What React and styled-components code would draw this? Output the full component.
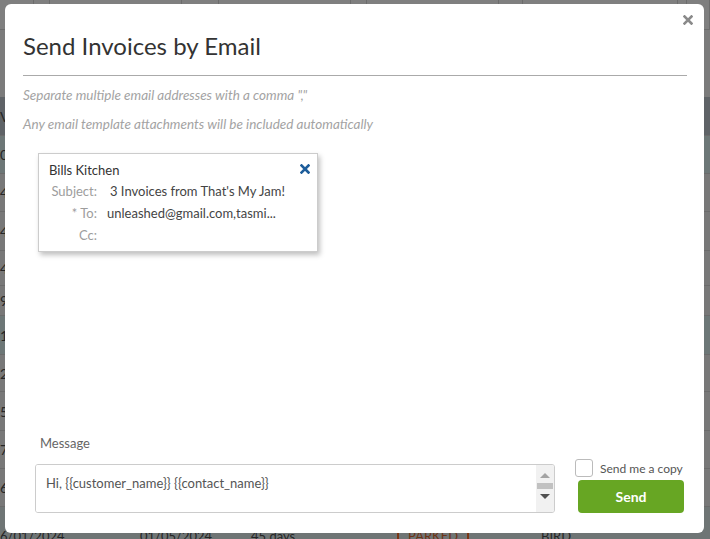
import React from 'react';
import styled, { createGlobalStyle } from 'styled-components';

const GlobalStyle = createGlobalStyle`
  html, body {
    margin: 0;
    padding: 0;
    background: #7b7b7b;
  }
  * {
    box-sizing: border-box;
  }
`;

const topCols = [34, 16, 132, 37, 132, 16, 132, 24, 155, 9, 23];

// only the first letter of each row peeks out left of the dialog
const rows = [
  { first: 'V', tone: 'head', h: 39 },
  { first: '0', tone: 'teal', h: 38 },
  { first: '4', tone: 'grey', h: 38 },
  { first: '4', tone: 'grey', h: 39 },
  { first: '4', tone: 'grey', h: 35 },
  { first: '9', tone: 'grey', h: 30 },
  { first: '1', tone: 'teal', h: 39 },
  { first: '2', tone: 'grey', h: 37 },
  { first: '5', tone: 'grey', h: 39 },
  { first: '7', tone: 'grey', h: 38 },
  { first: '6', tone: 'grey', h: 38 },
];

const tones = {
  head: '#5f6367',
  teal: '#6d7777',
  grey: '#787878',
};

const App = () => {
  return (
    <>
      <GlobalStyle />
      <Page>
        <Backdrop>
          <TopBar>
            {topCols.map((w, i) => (
              <TopCell key={i} style={{ width: w }} />
            ))}
          </TopBar>
          <Filler />
          {rows.map((r, i) => (
            <Row key={i} $tone={r.tone} style={{ height: r.h }}>
              {r.first}
            </Row>
          ))}
          <LastRow>
            <LastCell $w={140}>6/01/2024</LastCell>
            <LastCell $w={111}>01/05/2024</LastCell>
            <LastCell $w={146}>45 days</LastCell>
            <LastCell $w={144}>
              <Parked>PARKED</Parked>
            </LastCell>
            <LastCell $w={100}>BIRD</LastCell>
          </LastRow>
        </Backdrop>

        <Modal>
          <CloseButton aria-label="close">
            <svg width="10" height="10" viewBox="0 0 10 10">
              <path d="M1.5 1.5 L8.5 8.5 M8.5 1.5 L1.5 8.5" stroke="#8a8a8a" strokeWidth="2.6" strokeLinecap="square" />
            </svg>
          </CloseButton>

          <Header>
            <Title>Send Invoices by Email</Title>
            <Divider />
            <Hints>
              <Hint>Separate multiple email addresses with a comma ","</Hint>
              <Hint>Any email template attachments will be included automatically</Hint>
            </Hints>
          </Header>

          <Body>
            <Card>
              <RemoveButton aria-label="remove">
                <svg width="10" height="10" viewBox="0 0 10 10">
                  <path d="M1.5 1.5 L8.5 8.5 M8.5 1.5 L1.5 8.5" stroke="#1d5d9b" strokeWidth="2.6" strokeLinecap="square" />
                </svg>
              </RemoveButton>
              <CardName>Bills Kitchen</CardName>
              <Fields>
                <FieldLabel>Subject:</FieldLabel>
                <FieldValue $shift={3}>3 Invoices from That's My Jam!</FieldValue>
                <FieldLabel>* To:</FieldLabel>
                <FieldValue>unleashed@gmail.com,tasmi...</FieldValue>
                <FieldLabel>Cc:</FieldLabel>
                <FieldValue />
              </Fields>
            </Card>
          </Body>

          <Footer>
            <MessageColumn>
              <MessageLabel>Message</MessageLabel>
              <MessageBox>
                <MessageText defaultValue="Hi, {{customer_name}} {{contact_name}}" />
                <ScrollTrack>
                  <ArrowUp />
                  <Thumb />
                  <ArrowDown />
                </ScrollTrack>
              </MessageBox>
            </MessageColumn>
            <ActionColumn>
              <CopyRow>
                <CheckBox />
                <CopyText>Send me a copy</CopyText>
              </CopyRow>
              <SendButton>Send</SendButton>
            </ActionColumn>
          </Footer>
        </Modal>
      </Page>
    </>
  );
};

const Page = styled.div`
  position: relative;
  width: 710px;
  height: 539px;
  overflow: hidden;
  font-family: Lato, 'Liberation Sans', sans-serif;
`;

const Backdrop = styled.div`
  display: flex;
  flex-direction: column;
  width: 710px;
  background: #7b7b7b;
`;

const TopBar = styled.div`
  display: flex;
  height: 30px;
  border-bottom: 1px solid #6c6c6c;
  background: #7f7f7f;
`;

const TopCell = styled.div`
  height: 100%;
  border-right: 1px solid #6c6c6c;
`;

const Filler = styled.div`
  height: 67px;
`;

const Row = styled.div`
  display: flex;
  align-items: center;
  background: ${(p) => tones[p.$tone]};
  border-bottom: 1px solid #6b6b6b;
  font-size: 14px;
  color: #262626;
  white-space: nowrap;
`;

const LastRow = styled.div`
  display: flex;
  align-items: flex-start;
  height: 40px;
  padding-top: 21px;
  background: #6f7575;
  font-size: 13px;
  color: #262626;
  white-space: nowrap;
`;

const LastCell = styled.div`
  width: ${(p) => p.$w}px;
  line-height: 16px;
`;

const Parked = styled.span`
  padding: 0 9px;
  border-left: 2px solid #7a3614;
  border-right: 2px solid #7a3614;
  color: #6e3417;
`;

const Modal = styled.div`
  position: absolute;
  left: 5px;
  top: 4px;
  width: 699px;
  height: 529px;
  background: #fff;
  border-radius: 6px;
  display: flex;
  flex-direction: column;
`;

const CloseButton = styled.button`
  position: absolute;
  top: 8px;
  right: 8px;
  width: 16px;
  height: 16px;
  padding: 0;
  border: none;
  background: none;
  display: flex;
  align-items: center;
  justify-content: center;
  cursor: pointer;
`;

const Header = styled.div`
  padding: 27px 17px 0 18px;
`;

const Title = styled.h2`
  margin: 0;
  font-size: 24px;
  line-height: 30px;
  font-weight: 400;
  color: #333;
`;

const Divider = styled.div`
  margin-top: 14px;
  border-top: 1px solid #aaa;
`;

const Hints = styled.div`
  margin-top: 10px;
  display: flex;
  flex-direction: column;
  gap: 11px;
`;

const Hint = styled.div`
  font-size: 13.5px;
  line-height: 18px;
  font-style: italic;
  color: #a3a3a3;
`;

const Body = styled.div`
  flex: 1;
  padding: 20px 0 0 33px;
`;

const Card = styled.div`
  position: relative;
  width: 280px;
  height: 99px;
  padding: 7px 10px 0 8px;
  border: 1px solid #ccc;
  background: #fff;
  box-shadow: 2px 3px 5px rgba(0, 0, 0, 0.25);
`;

const RemoveButton = styled.button`
  position: absolute;
  top: 9px;
  right: 6px;
  width: 12px;
  height: 12px;
  padding: 0;
  border: none;
  background: none;
  display: flex;
  align-items: center;
  justify-content: center;
  cursor: pointer;
`;

const CardName = styled.div`
  margin-left: 2px;
  font-size: 13px;
  line-height: 18px;
  color: #333;
`;

const Fields = styled.div`
  display: grid;
  grid-template-columns: 50px 1fr;
  column-gap: 10px;
  row-gap: 4px;
  margin-top: 3px;
  font-size: 13px;
  line-height: 18px;
`;

const FieldLabel = styled.div`
  text-align: right;
  color: #9d9d9d;
`;

const FieldValue = styled.div`
  min-height: 18px;
  padding-left: ${(p) => p.$shift || 0}px;
  color: #444;
  white-space: nowrap;
`;

const Footer = styled.div`
  display: flex;
  align-items: flex-end;
  gap: 20px;
  padding: 0 20px 20px 30px;
`;

const MessageColumn = styled.div`
  display: flex;
  flex-direction: column;
  width: 520px;
`;

const MessageLabel = styled.div`
  margin-left: 5px;
  margin-bottom: 13px;
  font-size: 13px;
  line-height: 16px;
  color: #666;
`;

const MessageBox = styled.div`
  display: flex;
  height: 49px;
  border: 1px solid #ccc;
  border-radius: 3px;
  overflow: hidden;
`;

const MessageText = styled.textarea`
  flex: 1;
  border: none;
  outline: none;
  resize: none;
  padding: 9px 10px;
  font-family: Lato, 'Liberation Sans', sans-serif;
  font-size: 13px;
  line-height: 18px;
  color: #555;
  overflow: hidden;
`;

const ScrollTrack = styled.div`
  width: 18px;
  background: #f1f1f1;
  display: flex;
  flex-direction: column;
  align-items: center;
  padding: 8px 0 6px;
  gap: 5px;
`;

const ArrowUp = styled.div`
  width: 0;
  height: 0;
  border-left: 5px solid transparent;
  border-right: 5px solid transparent;
  border-bottom: 5px solid #a3a3a3;
`;

const Thumb = styled.div`
  width: 16px;
  height: 6px;
  background: #c1c1c1;
`;

const ArrowDown = styled.div`
  width: 0;
  height: 0;
  border-left: 5px solid transparent;
  border-right: 5px solid transparent;
  border-top: 5px solid #505050;
`;

const ActionColumn = styled.div`
  display: flex;
  flex-direction: column;
  align-items: flex-end;
  gap: 3px;
  width: 109px;
`;

const CopyRow = styled.label`
  display: flex;
  align-items: center;
  gap: 7px;
  width: 100%;
`;

const CheckBox = styled.span`
  width: 18px;
  height: 18px;
  border: 1px solid #bbb;
  border-radius: 3px;
  background: #fff;
`;

const CopyText = styled.span`
  font-size: 12px;
  color: #555;
  white-space: nowrap;
`;

const SendButton = styled.button`
  width: 106px;
  height: 33px;
  border: none;
  border-radius: 4px;
  background: #67a623;
  color: #fff;
  font-family: Lato, 'Liberation Sans', sans-serif;
  font-size: 14px;
  font-weight: 700;
  cursor: pointer;
`;

export default App;
